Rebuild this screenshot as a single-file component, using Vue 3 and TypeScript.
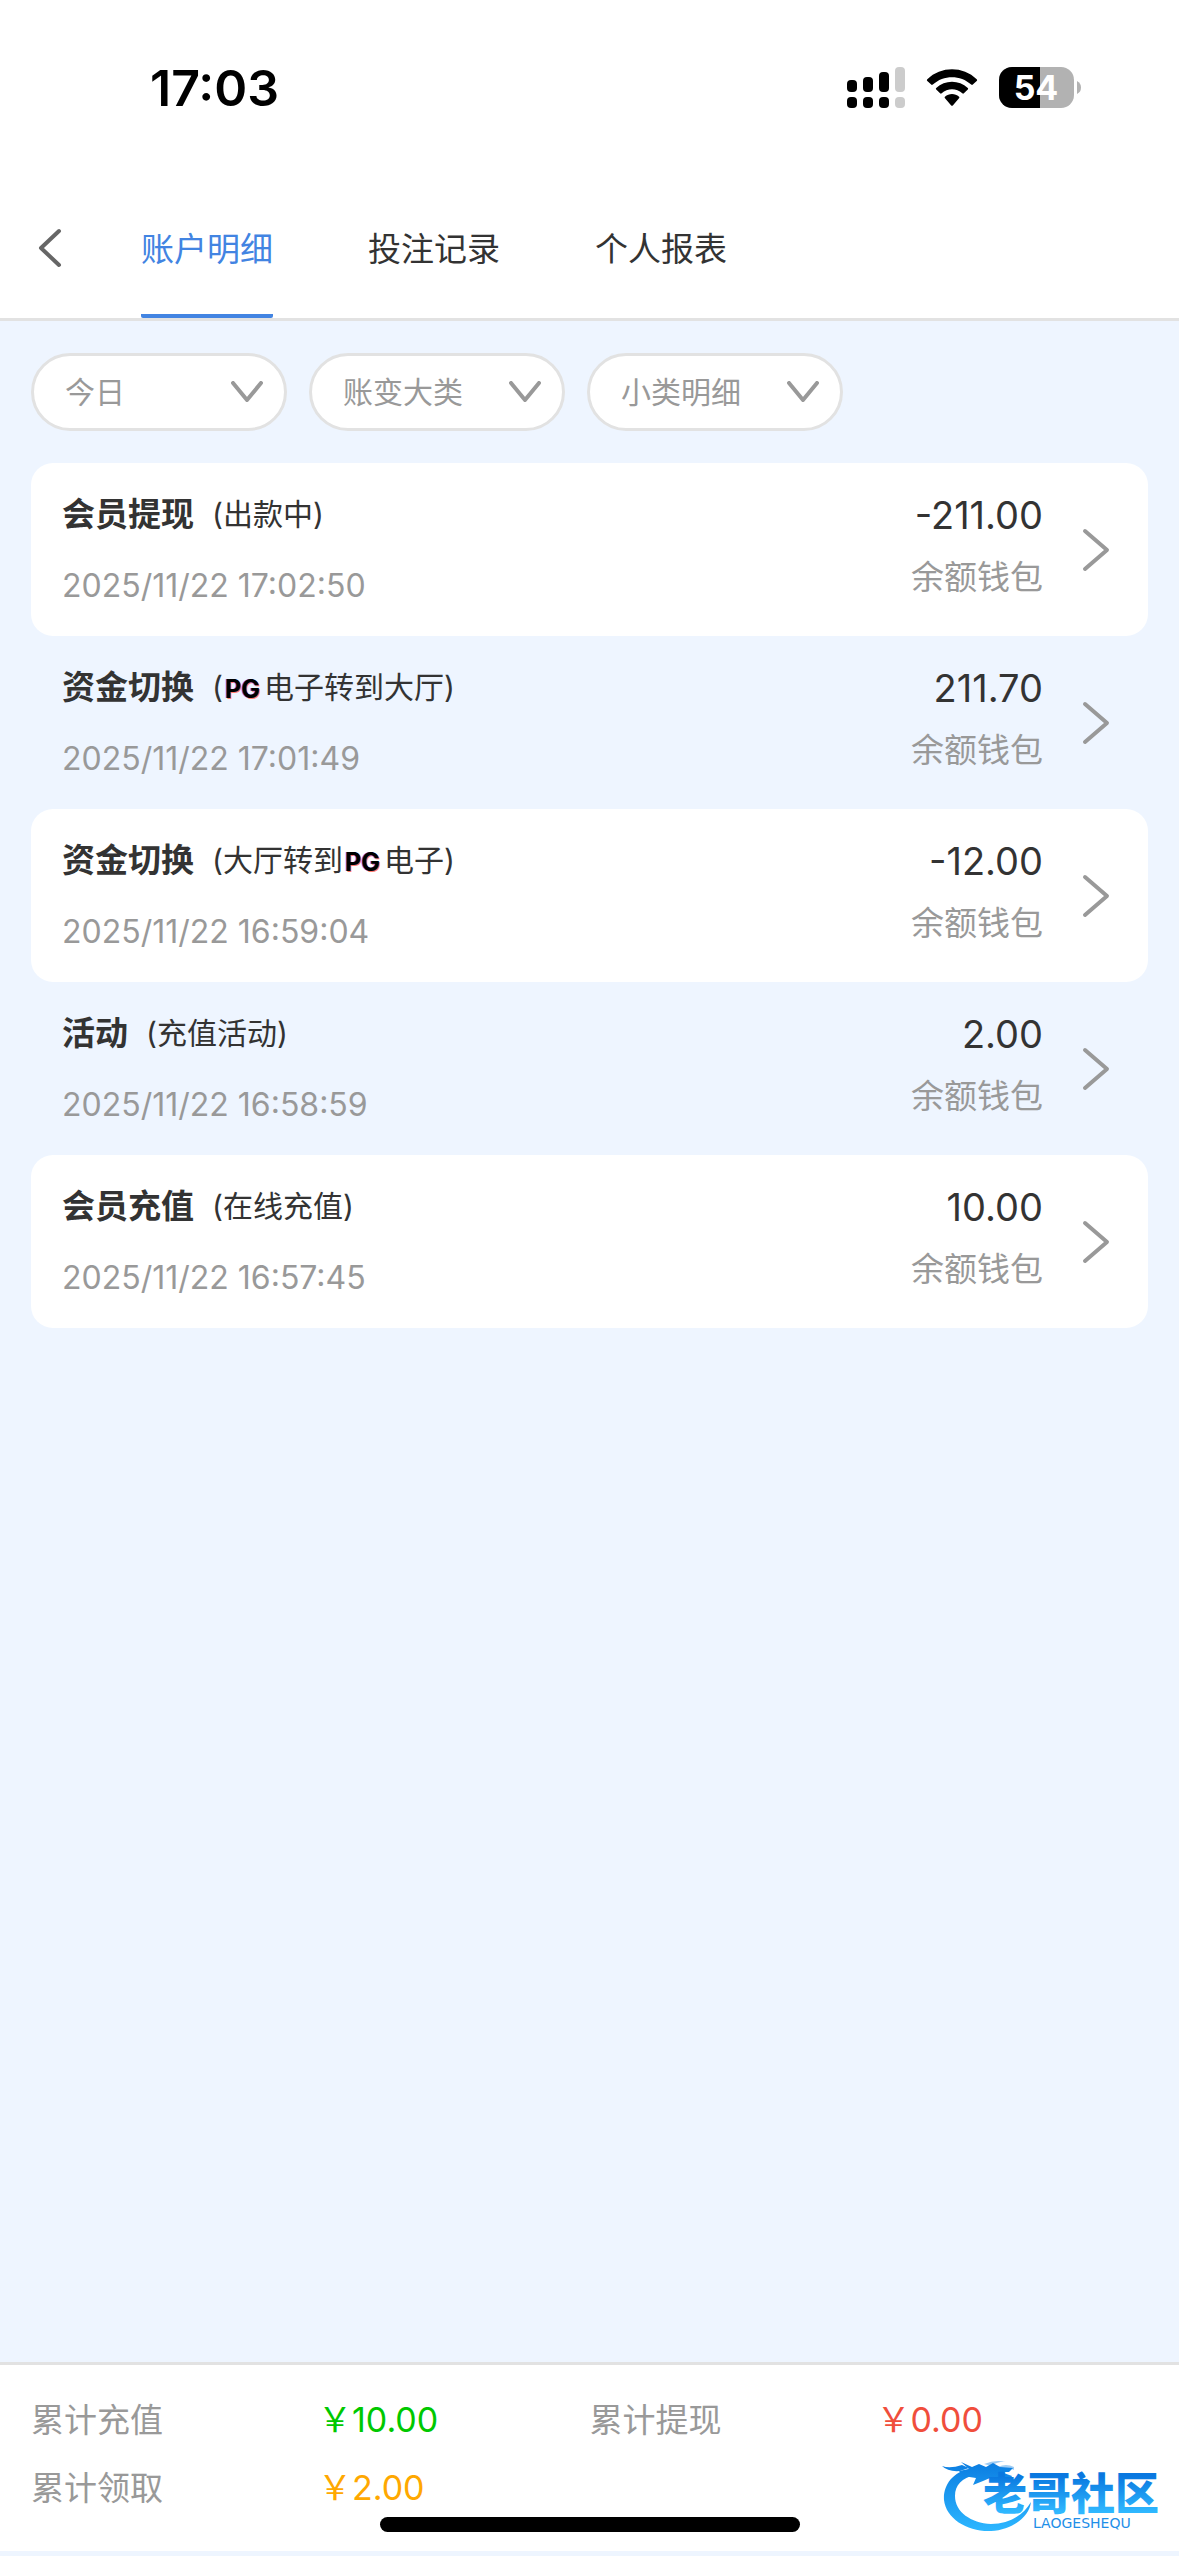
<script setup lang="ts">
import { ref } from 'vue'

interface Filter {
  id: string
  label: string
  options: string[]
}

interface Part {
  text: string
  brand?: boolean
}

interface Entry {
  title: string
  detail: Part[]
  time: string
  amount: string
}

interface Total {
  label: string
  value: string
  tone: 'green' | 'red' | 'orange'
}

const tabs = ['账户明细', '投注记录', '个人报表']
const activeTab = ref(0)

const filters: Filter[] = [
  { id: 'date', label: '日期', options: ['今日'] },
  { id: 'category', label: '账变大类', options: ['账变大类'] },
  { id: 'subcategory', label: '小类明细', options: ['小类明细'] },
]

const entries: Entry[] = [
  { title: '会员提现', detail: [{ text: '(出款中)' }], time: '2025/11/22 17:02:50', amount: '-211.00' },
  {
    title: '资金切换',
    detail: [{ text: '(' }, { text: 'PG', brand: true }, { text: '电子转到大厅)' }],
    time: '2025/11/22 17:01:49',
    amount: '211.70',
  },
  {
    title: '资金切换',
    detail: [{ text: '(大厅转到' }, { text: 'PG', brand: true }, { text: '电子)' }],
    time: '2025/11/22 16:59:04',
    amount: '-12.00',
  },
  { title: '活动', detail: [{ text: '(充值活动)' }], time: '2025/11/22 16:58:59', amount: '2.00' },
  { title: '会员充值', detail: [{ text: '(在线充值)' }], time: '2025/11/22 16:57:45', amount: '10.00' },
]

const totals: Total[] = [
  { label: '累计充值', value: '10.00', tone: 'green' },
  { label: '累计提现', value: '0.00', tone: 'red' },
  { label: '累计领取', value: '2.00', tone: 'orange' },
]
</script>

<template>
  <div class="page">
    <header class="top">
      <div class="status">
        <span class="clock">17:03</span>
        <div class="indicators">
          <svg width="58" height="41" viewBox="0 0 58 41" aria-hidden="true">
            <rect x="0" y="13" width="10" height="12" rx="4" />
            <rect x="16" y="10" width="10" height="15" rx="4" />
            <rect x="32" y="5" width="10" height="20" rx="4" />
            <rect x="48" y="0" width="10" height="25" rx="4" fill="#ccc" />
            <rect x="0" y="30" width="10" height="11" rx="4" />
            <rect x="16" y="30" width="10" height="11" rx="4" />
            <rect x="32" y="30" width="10" height="11" rx="4" />
            <rect x="48" y="30" width="10" height="11" rx="4" fill="#ccc" />
          </svg>
          <svg width="52" height="41" viewBox="0 0 52 41" aria-hidden="true">
            <path d="M1.3 12.2Q0.4 13.1 1.3 14L5.2 17.6Q6 18.2 6.8 17.5C17.500 7.700 34.500 7.700 45.200 17.500Q46 18.200 46.800 17.600L50.700 14Q51.600 13.100 50.700 12.200C37-1.100 15-1.100 1.300 12.200Z" />
            <path d="M10.200 21Q9.400 21.800 10.200 22.600L14.100 26.300Q14.900 27 15.700 26.300C21.500 20.900 30.500 20.900 36.300 26.300Q37.100 27 37.900 26.300L41.800 22.600Q42.600 21.800 41.800 21C33 12.700 19 12.700 10.200 21Z" />
            <path d="M18.900 29.700Q18.200 30.500 19 31.300L25.200 38.400Q26 39.200 26.800 38.400L33 31.300Q33.800 30.500 33.100 29.700C29 26.200 23 26.200 18.900 29.700Z" />
          </svg>
          <svg class="battery" width="82" height="41" viewBox="0 0 82 41" role="img" aria-label="54%">
            <rect width="75" height="41" rx="13" fill="#b2b2b2" />
            <path d="M13 0H41V41H13A13 13 0 0 1 0 28V13A13 13 0 0 1 13 0Z" />
            <path d="M78 14Q82 16 82 20.500Q82 25 78 27Z" fill="#b2b2b2" />
            <text x="37" y="33" text-anchor="middle">54</text>
          </svg>
        </div>
      </div>

      <nav class="nav">
        <button class="back" type="button" aria-label="返回">
          <svg width="24" height="40" viewBox="0 0 24 40" fill="none" stroke="#666" stroke-width="4" stroke-linecap="round" stroke-linejoin="round">
            <path d="M21 3L3 20L21 37" />
          </svg>
        </button>
        <button
          v-for="(tab, i) in tabs"
          :key="tab"
          type="button"
          class="tab"
          :class="{ active: i === activeTab }"
          @click="activeTab = i"
        >
          {{ tab }}
        </button>
      </nav>
    </header>

    <main class="content">
      <form class="filters">
        <label v-for="f in filters" :key="f.id" class="filter" :for="f.id">
          <select :id="f.id" :aria-label="f.label">
            <option v-for="o in f.options" :key="o">{{ o }}</option>
          </select>
          <svg width="32" height="22" viewBox="0 0 32 22" fill="none" stroke="#999" stroke-width="4" stroke-linecap="round" stroke-linejoin="round" aria-hidden="true">
            <path d="M2 2L16 19L30 2" />
          </svg>
        </label>
      </form>

      <ul class="entries">
        <li v-for="e in entries" :key="e.time">
          <a class="entry" href="#">
            <span class="info">
              <span class="heading">
                <strong>{{ e.title }}</strong>
                <span class="detail"><span v-for="(p, i) in e.detail" :key="i" :class="{ brand: p.brand }">{{ p.text }}</span></span>
              </span>
              <time>{{ e.time }}</time>
            </span>
            <span class="money">
              <span class="amount">{{ e.amount }}</span>
              <span class="wallet">余额钱包</span>
            </span>
            <svg class="arrow" width="28" height="44" viewBox="0 0 28 44" fill="none" stroke="#999" stroke-width="4" stroke-linecap="round" stroke-linejoin="round" aria-hidden="true">
              <path d="M3 3L25 22L3 41" />
            </svg>
          </a>
        </li>
      </ul>
    </main>

    <footer class="summary">
      <dl>
        <div v-for="t in totals" :key="t.label">
          <dt>{{ t.label }}</dt>
          <dd :class="t.tone"><span class="yen">&#xFFE5;</span>{{ t.value }}</dd>
        </div>
      </dl>
    </footer>

    <svg class="watermark" width="224" height="80" viewBox="0 0 224 80" role="img" aria-label="老哥社区">
      <defs>
        <linearGradient id="wm" gradientUnits="userSpaceOnUse" x1="0" y1="8" x2="0" y2="78">
          <stop offset="0" stop-color="#0a7be0" />
          <stop offset="1" stop-color="#2cb6ff" />
        </linearGradient>
        <linearGradient id="wt" gradientUnits="userSpaceOnUse" x1="0" y1="24" x2="0" y2="60">
          <stop offset="0" stop-color="#0a78e0" />
          <stop offset="1" stop-color="#2fb8ff" />
        </linearGradient>
      </defs>
      <g fill="url(#wm)">
        <path d="M29 17C11 20 2 34 3 48C5 67 27 80 50 79C70 78 88 66 90 50C82 64 67 72 50 72C30 71 14 60 14 44C14 33 21 26 34 23Z" />
        <path d="M1 14Q9 17 21 13L28 16L19 19Q7 20 1 14Z" />
        <path d="M20 10L31 15L38 12L45 15L52 11L59 15L72 16L68 20L60 20L71 24L69 28L57 26L51 30L49 26L42 29L32 33L35 26L22 24L18 19L28 17Z" />
        <path d="M43 12Q55 7 65 10Q58 9 50 14ZM57 15Q65 11 73 15L73 18Q66 14 58 18Z" opacity="0.4" />
      </g>
      <text class="mark-name" x="42" y="58" fill="url(#wt)">老哥社区</text>
      <text class="mark-latin" x="92" y="76">LAOGESHEQU</text>
    </svg>
    <div class="home-bar"></div>
  </div>
</template>

<style>
body {
  margin: 0;
  background: #eef5ff;
}
</style>

<style scoped>
.page {
  position: relative;
  display: flex;
  flex-direction: column;
  box-sizing: border-box;
  min-height: 100vh;
  padding-bottom: 5px;
  background: #eef5ff;
  color: #333;
  font-family: Inter, 'Noto Sans CJK SC', sans-serif;
  font-size: 33px;
  line-height: 48px;
}

button,
select {
  margin: 0;
  padding: 0;
  border: 0;
  background: none;
  color: inherit;
  font: inherit;
}

svg {
  display: block;
  flex: none;
}

.top {
  background: #fff;
  border-bottom: 3px solid #e2e2e2;
}

.status {
  display: flex;
  justify-content: space-between;
  align-items: center;
  height: 175px;
  padding: 0 98px 0 150px;
  color: #000;
}

.clock {
  font-size: 50px;
  font-weight: 600;
}

.indicators {
  display: flex;
  gap: 21px;
}

.battery text {
  fill: #fff;
  font-size: 34px;
  font-weight: 700;
}

.nav {
  display: flex;
  align-items: stretch;
  gap: 95px;
  height: 143px;
  padding-left: 38px;
}

.back {
  margin-right: -16px;
  padding-top: 3px;
}

.tab {
  padding-top: 8px;
  border-bottom: 4px solid transparent;
}

.tab.active {
  border-color: #4284e2;
  border-radius: 2px;
  color: #4284e2;
}

.content {
  flex: 1;
  padding: 32px 31px;
}

.filters {
  display: flex;
  gap: 22px;
  margin-bottom: 32px;
}

.filter {
  display: grid;
  align-items: center;
  width: 256px;
}

.filter select {
  grid-area: 1 / 1;
  box-sizing: border-box;
  width: 100%;
  height: 78px;
  padding: 0 60px 0 31px;
  border: 3px solid #e2e2e2;
  border-radius: 39px;
  background: #fff;
  color: #999;
  font-size: 30px;
  appearance: none;
}

.filter svg {
  grid-area: 1 / 1;
  justify-self: end;
  margin-right: 24px;
  pointer-events: none;
}

.entries {
  margin: 0;
  padding: 0;
  list-style: none;
}

.entry {
  display: flex;
  padding: 27px 38px 26px 31px;
  border-radius: 22px;
  color: inherit;
  text-decoration: none;
}

.entries li:nth-child(odd) .entry {
  background: #fff;
}

.info {
  display: flex;
  flex: 1;
  flex-direction: column;
  gap: 24px;
}

.heading {
  display: flex;
  gap: 18px;
}

.detail {
  font-size: 30px;
}

.brand {
  display: inline-block;
  margin: 0 4px 0 2px;
  color: #000;
  font-size: 25px;
  font-weight: 700;
  line-height: 24px;
  text-shadow: -1px 0 0 #8a6cff, 1px 1px 0 #ff7a6c;
}

time {
  color: #999;
  font-size: 32px;
}

.money {
  display: flex;
  flex-direction: column;
  gap: 14px;
  padding-top: 1px;
  text-align: right;
}

.amount {
  font-size: 38px;
}

.wallet {
  color: #999;
}

.arrow {
  align-self: center;
  margin-left: 39px;
}

.summary {
  background: #fff;
  border-top: 3px solid #e2e2e2;
}

.summary dl {
  display: grid;
  grid-template-columns: 1fr 1fr;
  gap: 20px 0;
  margin: 0;
  padding: 31px 31px 39px;
}

.summary dl div {
  display: flex;
}

.summary dt {
  width: 287px;
  color: #999;
}

.summary dd {
  margin: 0;
  font-size: 34px;
}

.yen {
  font-family: 'Noto Sans CJK SC', sans-serif;
  line-height: 33px;
}

.green {
  color: #00c800;
}

.red {
  color: #f04e3c;
}

.orange {
  color: #ffa800;
}

.watermark {
  position: absolute;
  right: 14px;
  bottom: 24px;
}

.mark-name {
  font-family: 'Noto Sans CJK SC', sans-serif;
  font-size: 44px;
  font-weight: 900;
}

.mark-latin {
  fill: #1f8fe8;
  font-family: 'DejaVu Sans', sans-serif;
  font-size: 14px;
}

.home-bar {
  position: absolute;
  bottom: 24px;
  left: 50%;
  width: 420px;
  height: 15px;
  margin-left: -210px;
  border-radius: 8px;
  background: #000;
}
</style>
